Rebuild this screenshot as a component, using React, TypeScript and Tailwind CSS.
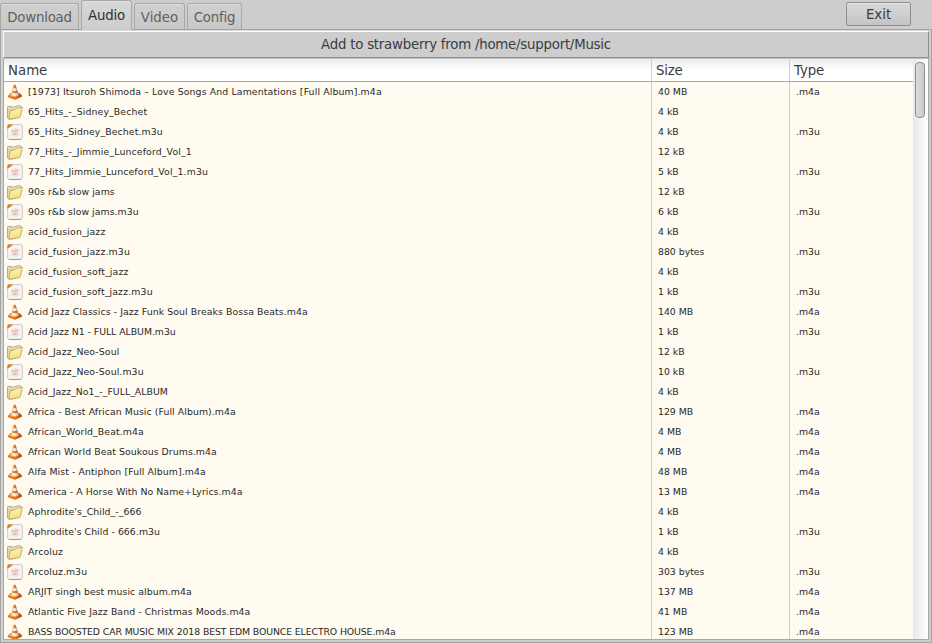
type Kind = 'audio' | 'folder' | 'list';

// kind, name, size, letter spacing of the name in pixels
const FILES: [Kind, string, string, number][] = [
  ['audio', '[1973] Itsuroh Shimoda – Love Songs And Lamentations [Full Album].m4a', '40 MB', 0.13],
  ['folder', '65_Hits_-_Sidney_Bechet', '4 kB', 0.13],
  ['list', '65_Hits_Sidney_Bechet.m3u', '4 kB', 0.11],
  ['folder', '77_Hits_-_Jimmie_Lunceford_Vol_1', '12 kB', 0.14],
  ['list', '77_Hits_Jimmie_Lunceford_Vol_1.m3u', '5 kB', 0.14],
  ['folder', '90s r&b slow jams', '12 kB', 0.06],
  ['list', '90s r&b slow jams.m3u', '6 kB', 0.05],
  ['folder', 'acid_fusion_jazz', '4 kB', 0.15],
  ['list', 'acid_fusion_jazz.m3u', '880 bytes', 0.15],
  ['folder', 'acid_fusion_soft_jazz', '4 kB', 0.17],
  ['list', 'acid_fusion_soft_jazz.m3u', '1 kB', 0.15],
  ['audio', 'Acid Jazz Classics - Jazz Funk Soul Breaks Bossa Beats.m4a', '140 MB', 0.08],
  ['list', 'Acid Jazz N1 - FULL ALBUM.m3u', '1 kB', -0.03],
  ['folder', 'Acid_Jazz_Neo-Soul', '12 kB', 0.1],
  ['list', 'Acid_Jazz_Neo-Soul.m3u', '10 kB', 0.1],
  ['folder', 'Acid_Jazz_No1_-_FULL_ALBUM', '4 kB', 0.04],
  ['audio', 'Africa - Best African Music (Full Album).m4a', '129 MB', 0.08],
  ['audio', 'African_World_Beat.m4a', '4 MB', 0.09],
  ['audio', 'African World Beat Soukous Drums.m4a', '4 MB', 0.07],
  ['audio', 'Alfa Mist - Antiphon [Full Album].m4a', '48 MB', 0.1],
  ['audio', 'America - A Horse With No Name+Lyrics.m4a', '13 MB', 0.05],
  ['folder', "Aphrodite's_Child_-_666", '4 kB', 0.09],
  ['list', "Aphrodite's Child - 666.m3u", '1 kB', 0.06],
  ['folder', 'Arcoluz', '4 kB', 0.12],
  ['list', 'Arcoluz.m3u', '303 bytes', 0.09],
  ['audio', 'ARJIT singh best music album.m4a', '137 MB', 0.06],
  ['audio', 'Atlantic Five Jazz Band - Christmas Moods.m4a', '41 MB', 0.09],
  ['audio', 'BASS BOOSTED CAR MUSIC MIX 2018 BEST EDM BOUNCE ELECTRO HOUSE.m4a', '123 MB', -0.11],
];

const EXT: Record<Kind, string> = { audio: '.m4a', folder: '', list: '.m3u' };

function Gradients() {
  return (
    <svg className="absolute h-0 w-0">
      <defs>
        <linearGradient id="cone" x1="0" x2="1">
          <stop offset="0" stopColor="#fba53e" />
          <stop offset=".45" stopColor="#f07f16" />
          <stop offset="1" stopColor="#b54400" />
        </linearGradient>
        <linearGradient id="band" x1="0" x2="1">
          <stop offset="0" stopColor="#ddd3ca" />
          <stop offset=".45" stopColor="#faf6f2" />
          <stop offset="1" stopColor="#a8a3a0" />
        </linearGradient>
        <linearGradient id="flap" x1="0" y1="0" x2=".5" y2="1">
          <stop offset="0" stopColor="#fffbdc" />
          <stop offset="1" stopColor="#f8dd6c" />
        </linearGradient>
      </defs>
    </svg>
  );
}

function FileIcon({ kind }: { kind: Kind }) {
  if (kind === 'audio')
    return (
      <svg className="h-4 w-4 shrink-0" viewBox="0 0 16 16">
        <path d="M3.4 9.2h9.2l2.5 2.6-.2 1L8 15.8 .8 12.9v-1z" fill="#c95d08" />
        <path d="M3.4 9.2h9.2l2.4 2.7L8 14.9 .9 12z" fill="url(#cone)" />
        <path d="M6.7 1Q7.7.1 8.7 1l3.1 9.9q-4 2.7-7.8 0z" fill="url(#cone)" />
        <path d="M6 3.9q1.8.8 3.6 0l.8 2.6q-2.6 1.1-5.2 0z" fill="url(#band)" />
        <path d="M4.6 8.6q3.2 1.5 6.5 0l.9 2.6q-4 2.4-8.1 0z" fill="url(#band)" />
      </svg>
    );
  if (kind === 'folder')
    return (
      <svg className="h-4 w-4 shrink-0" viewBox="0 0 16 16">
        <path d="M.5 13.9V3.2q0-.7.8-.8h3.1l1.2.8 7.2-1.8 1 .7v2L9 14.4l-6.8.9z" fill="#e4d7a6" stroke="#9f946c" strokeWidth=".7" />
        <path d="M5.8 4.2l7-1.9.5 2z" fill="#f8f1cb" />
        <path d="M1.9 15.3L3.4 6.8l4.4-.9 1.4-1.5 6.3-1.2-2.1 9.5-1.1 1z" fill="url(#flap)" stroke="#ad9a5c" strokeWidth=".7" />
      </svg>
    );
  return (
    <svg className="h-4 w-4 shrink-0" viewBox="0 0 16 16">
      <rect x=".6" y=".6" width="14.8" height="14.7" rx="1.8" fill="#f6f4f5" stroke="#c3c0c5" strokeWidth=".8" />
      <path d="M1.8 15.5h12.4" stroke="#949196" strokeWidth=".8" />
      <rect x="3.6" y="4.2" width="9.2" height="8.2" fill="#f9e8df" />
      <path d="M.4 5V1.8Q.4.4 1.8.4h4.8z" fill="#e57b1c" />
      <path d="M1 5.6L6.3 1 5.2 4.4z" fill="#fff" />
      <path d="M5 6.6h2M8 6.2h3.2M5.7 9.2h1.4M8 9h2.2M6.2 10.6h3.2" stroke="#c79c8b" strokeWidth=".7" />
      <path d="M5.4 7.8h4.8" stroke="#c99a88" strokeWidth=".5" />
    </svg>
  );
}

const TAB = 'flex justify-center rounded-t-[3px] border border-b-0 border-[#a8a8a8] shadow-[inset_0_1px_0_#dedede]';
const IDLE = 'h-[26px] bg-linear-to-b from-[#d0d0d0] to-[#c8c8c8] pt-[5px] text-[#606060]';

export default function App() {
  return (
    <div className="flex h-[643px] w-[932px] flex-col overflow-hidden bg-[#cdcdcd] font-['DejaVu_Sans',sans-serif] text-[13.33px] leading-[18px] text-[#3c3c3c]">
      <Gradients />
      <div className="flex h-[29px] shrink-0 items-end">
        <div className={`${TAB} ${IDLE} w-[79px] tracking-[-0.2px]`}>Download</div>
        <div className={`${TAB} z-10 -mb-px ml-[2px] h-[30px] w-[51px] bg-linear-to-b from-[#d8d8d8] to-[#cdcdcd] pt-[6px] tracking-[-0.15px] text-[#303030]`}>Audio</div>
        <div className={`${TAB} ${IDLE} ml-[2px] w-[51px]`}>Video</div>
        <div className={`${TAB} ${IDLE} ml-[2px] w-[55px] tracking-[-0.2px]`}>Config</div>
        <button className="mr-[21px] mb-[3px] ml-auto h-[24px] w-[65px] rounded-[2px] border border-[#8e8e8e] bg-linear-to-b from-[#d9d9d9] to-[#c4c4c4] pt-px text-center leading-[21px] shadow-[inset_0_1px_0_#e8e8e8]">Exit</button>
      </div>
      <div className="flex min-h-0 flex-1 flex-col border border-[#a3a3a3] p-[2px] pt-px shadow-[inset_1px_1px_0_#d8d8d8]">
        <button className="h-[27px] shrink-0 border border-t-white border-r-[#8e8e8e] border-b-[#8e8e8e] border-l-white bg-[#cdcdcd] text-center leading-[25px] tracking-[-0.23px]">
          Add to strawberry from /home/support/Music
        </button>
        <div className="flex min-h-0 flex-1 border border-[#a8a8a8] border-t-[#c0c0c0] bg-[#fffbf0]">
          <div className="flex min-w-0 flex-1 flex-col">
            <div className="flex h-[23px] shrink-0 border-b border-[#a8a8a8] bg-linear-to-b from-[#ebebeb] to-white to-50% leading-[23px]">
              <div className="w-[648px] border-r border-[#d0d0d0] pl-[4px]">Name</div>
              <div className="w-[138px] border-r border-[#d0d0d0] pl-[4px] tracking-[-0.2px]">Size</div>
              <div className="flex-1 pl-[4px] tracking-[-0.1px]">Type</div>
            </div>
            <div className="min-h-0 flex-1 overflow-hidden text-[9.33px] leading-[20px] text-[#282828]">
              {FILES.map(([kind, name, size, spacing]) => (
                <div key={name} className="flex h-[20px]">
                  <div
                    className="flex w-[648px] items-center gap-[5px] border-r border-[#d0cdc6] pl-[3px] whitespace-pre"
                    style={{ letterSpacing: spacing }}
                  >
                    <FileIcon kind={kind} />
                    {name}
                  </div>
                  <div className="w-[138px] border-r border-[#d0cdc6] pl-[6px]">{size}</div>
                  <div className="flex-1 pl-[6px]">{EXT[kind]}</div>
                </div>
              ))}
            </div>
          </div>
          <div className="w-[15px] shrink-0 bg-linear-to-r from-[#e8e8e8] to-white pt-[3px] pl-[2px]">
            <div className="h-[56px] w-[10px] rounded-[4px] border border-[#8e8e8e] bg-linear-to-r from-[#dcdcdc] to-[#cacaca]" />
          </div>
        </div>
      </div>
    </div>
  );
}
